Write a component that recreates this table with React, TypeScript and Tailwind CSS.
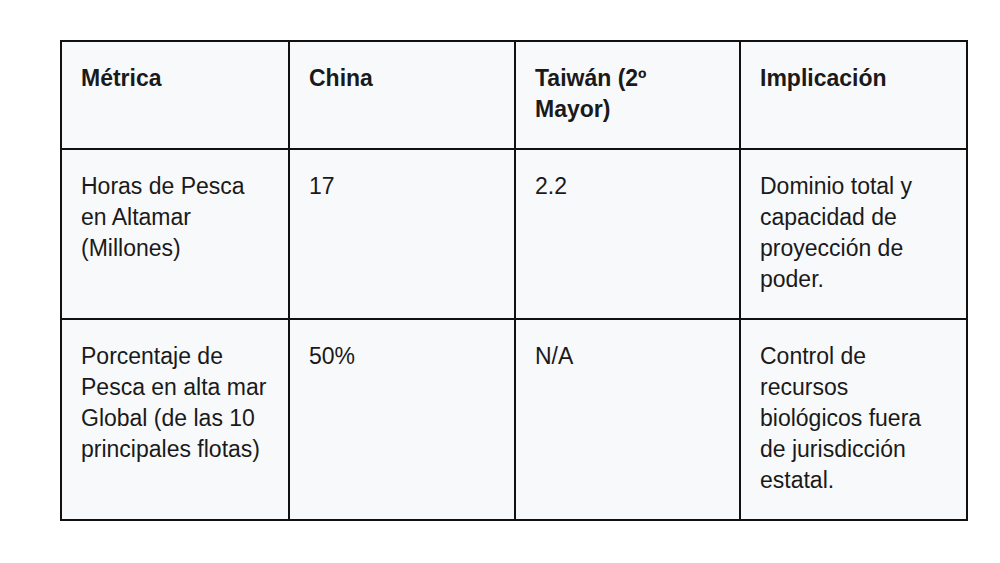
import React from "react";

const rows = [
  {
    a: "Horas de Pesca en Altamar (Millones)",
    b: "17",
    c: "2.2",
    d: "Dominio total y capacidad de proyección de poder.",
  },
  {
    a: "Porcentaje de Pesca en alta mar Global (de las 10 principales flotas)",
    b: "50%",
    c: "N/A",
    d: "Control de recursos biológicos fuera de jurisdicción estatal.",
  },
];

export default function App() {
  const cell =
    "border-2 border-[#111] align-top pl-[19px] pr-[19px] pt-[21px] pb-[23px] text-left";
  return (
    <div
      className="w-[1000px] h-[563px] bg-white pl-[60px] pt-[40px] text-[23px] leading-[31px] text-[#1a1a1a]"
      style={{ fontFamily: '"Liberation Sans", Arial, sans-serif' }}
    >
      <table className="w-[906px] table-fixed border-collapse bg-[#f8f9fb]">
        <colgroup>
          <col className="w-[228px]" />
          <col className="w-[226px]" />
          <col className="w-[225px]" />
          <col className="w-[227px]" />
        </colgroup>
        <thead>
          <tr>
            <th className={cell + " font-bold"}>Métrica</th>
            <th className={cell + " font-bold"}>China</th>
            <th className={cell + " font-bold"}>Taiwán (2º Mayor)</th>
            <th className={cell + " font-bold"}>Implicación</th>
          </tr>
        </thead>
        <tbody>
          {rows.map((r, i) => (
            <tr key={i}>
              <td className={cell}>{r.a}</td>
              <td className={cell}>{r.b}</td>
              <td className={cell}>{r.c}</td>
              <td className={cell}>{r.d}</td>
            </tr>
          ))}
        </tbody>
      </table>
    </div>
  );
}
